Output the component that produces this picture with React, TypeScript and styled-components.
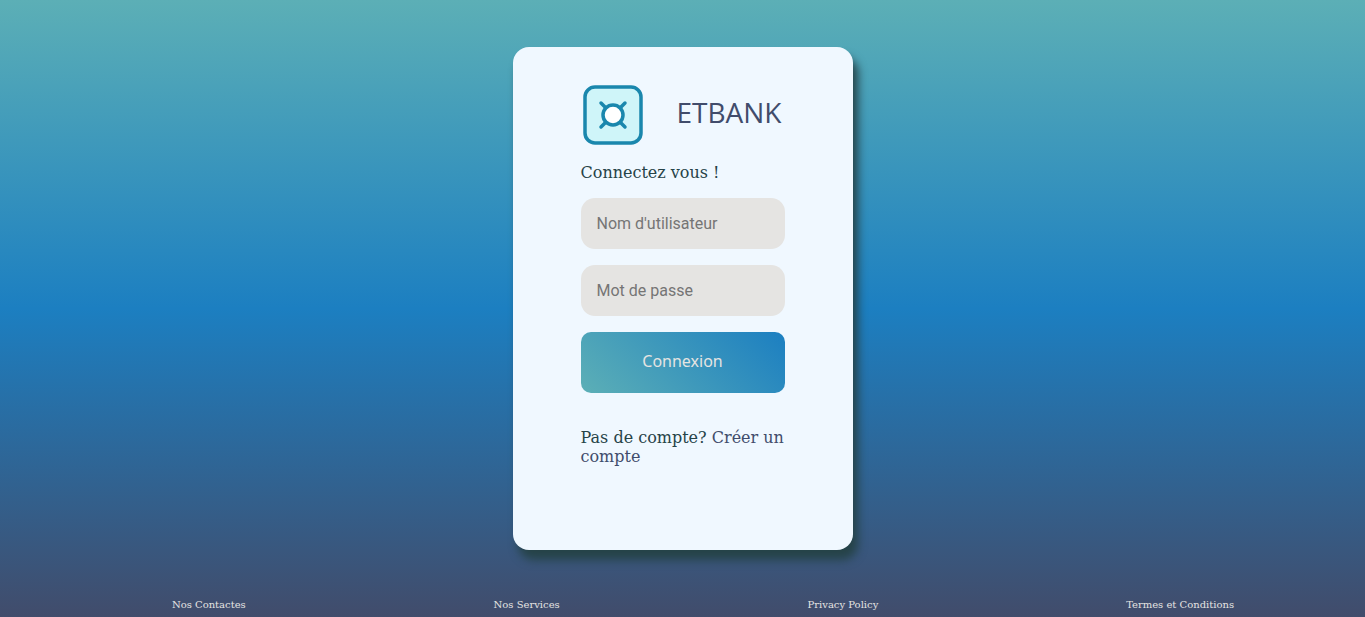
import React from "react";
import styled, { createGlobalStyle } from "styled-components";

const GlobalStyle = createGlobalStyle`
  * { box-sizing: border-box; }
  body { margin: 0; }
`;

const Page = styled.div`
  min-height: 100vh;
  display: flex;
  flex-direction: column;
  background: linear-gradient(180deg, #5cafb6 0%, #1c7fc1 50%, #414c6b 100%);
  font-family: "DejaVu Serif", serif;
  color: #264348;
`;

const Main = styled.main`
  flex: 1;
  display: flex;
  justify-content: center;
  align-items: flex-start;
  padding: 47px 16px 48px;
`;

const Card = styled.section`
  width: 340px;
  min-height: 503px;
  padding: 36px 68px;
  border-radius: 16px;
  background: #f0f8ff;
  box-shadow: 5px 10px 10px #264348;
`;

const Brand = styled.header`
  display: flex;
  align-items: center;
  gap: 32px;
  height: 64px;
  margin-bottom: 16px;
`;

const BrandName = styled.h1`
  margin: 0;
  padding-bottom: 6px;
  font: 400 28px/40px "Open Sans", sans-serif;
  color: #414c6b;
`;

const Text = styled.p`
  margin: 0 0 16px;
  font-size: 16px;
  line-height: 19px;
`;

const Form = styled.form`
  display: flex;
  flex-direction: column;
  gap: 16px;
  margin-bottom: 35px;
`;

const Field = styled.input`
  width: 100%;
  height: 51px;
  padding: 0 16px;
  border: 0;
  border-radius: 14px;
  background: #e5e4e2;
  font: 16px Roboto, sans-serif;
  &::placeholder { color: #757575; opacity: 1; }
`;

const Submit = styled.button`
  height: 61px;
  padding: 0 16px 4px;
  border: 0;
  border-radius: 10px;
  background: linear-gradient(45deg, #5cafb6, #1c7fc1);
  color: #e5e4e2;
  font: 16px "Noto Sans", sans-serif;
  cursor: pointer;
`;

const SignupLink = styled.a`
  color: #414c6b;
  text-decoration: none;
`;

const Footer = styled.footer`
  display: flex;
  justify-content: space-around;
  padding: 0 7px 6px 48px;
`;

const FooterLink = styled.a`
  color: #e5e4e2;
  font-size: 10px;
  line-height: 13px;
  text-decoration: none;
`;

function Logo() {
  return (
    <svg width="64" height="64" viewBox="0 0 64 64" fill="none" stroke="#1a87ad" strokeWidth="3.5" strokeLinecap="round" aria-hidden="true">
      <rect x="4" y="4" width="56" height="56" rx="10" fill="#cff5f9" />
      <path d="m20 20 5 5m19-5-5 5M20 44l5-5m19 5-5-5" />
      <circle cx="32" cy="32" r="10" fill="#ffffff" />
    </svg>
  );
}

export default function App() {
  return (
    <Page>
      <GlobalStyle />
      <Main>
        <Card>
          <Brand>
            <Logo />
            <BrandName>ETBANK</BrandName>
          </Brand>
          <Text>Connectez vous !</Text>
          <Form onSubmit={(e) => e.preventDefault()}>
            <Field type="text" placeholder="Nom d'utilisateur" aria-label="Nom d'utilisateur" />
            <Field type="password" placeholder="Mot de passe" aria-label="Mot de passe" />
            <Submit type="submit">Connexion</Submit>
          </Form>
          <Text>
            Pas de compte? <SignupLink href="#inscription">Créer un compte</SignupLink>
          </Text>
        </Card>
      </Main>
      <Footer>
        <FooterLink href="#contacts">Nos Contactes</FooterLink>
        <FooterLink href="#services">Nos Services</FooterLink>
        <FooterLink href="#privacy">Privacy Policy</FooterLink>
        <FooterLink href="#conditions">Termes et Conditions</FooterLink>
      </Footer>
    </Page>
  );
}
